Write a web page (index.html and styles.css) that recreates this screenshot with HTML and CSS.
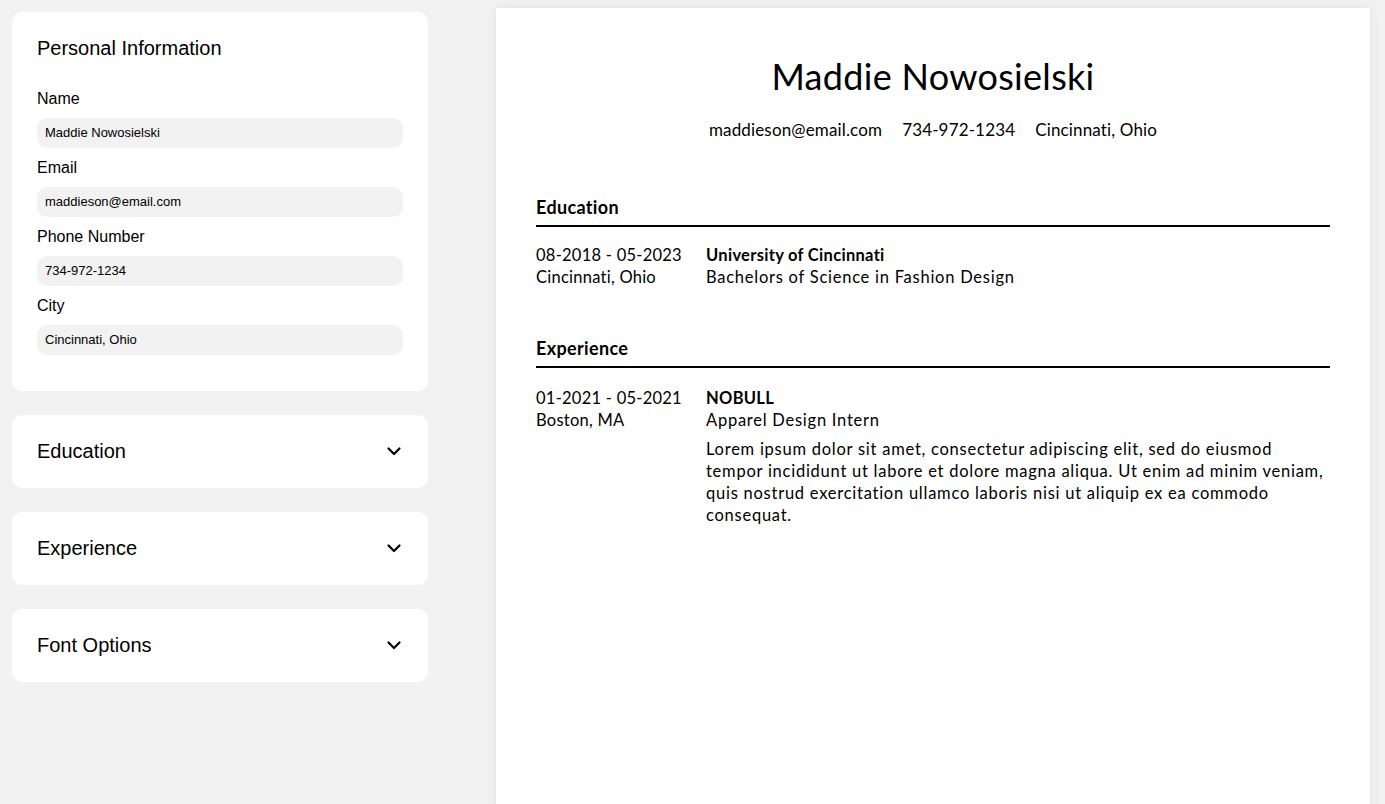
FILE: index.html
```html
<!DOCTYPE html>
<html lang="en">
<head>
<meta charset="utf-8">
<title>Resume Builder</title>
<link rel="stylesheet" href="styles.css">
</head>
<body>
<div class="app">
  <aside class="editor">
    <section class="card">
      <h2 class="card-title">Personal Information</h2>
      <div class="fields">
        <label class="field">
          <span class="field-label">Name</span>
          <span class="input">Maddie Nowosielski</span>
        </label>
        <label class="field">
          <span class="field-label">Email</span>
          <span class="input">maddieson@email.com</span>
        </label>
        <label class="field">
          <span class="field-label">Phone Number</span>
          <span class="input">734-972-1234</span>
        </label>
        <label class="field">
          <span class="field-label">City</span>
          <span class="input">Cincinnati, Ohio</span>
        </label>
      </div>
    </section>
    <section class="card collapsed">
      <h2 class="card-title">Education</h2>
      <svg class="chevron" viewBox="0 0 16 16" width="16" height="16"><path d="M2.5 5.5 8 11l5.5-5.5" fill="none" stroke="#000" stroke-width="2.2" stroke-linecap="round" stroke-linejoin="round"/></svg>
    </section>
    <section class="card collapsed">
      <h2 class="card-title">Experience</h2>
      <svg class="chevron" viewBox="0 0 16 16" width="16" height="16"><path d="M2.5 5.5 8 11l5.5-5.5" fill="none" stroke="#000" stroke-width="2.2" stroke-linecap="round" stroke-linejoin="round"/></svg>
    </section>
    <section class="card collapsed">
      <h2 class="card-title">Font Options</h2>
      <svg class="chevron" viewBox="0 0 16 16" width="16" height="16"><path d="M2.5 5.5 8 11l5.5-5.5" fill="none" stroke="#000" stroke-width="2.2" stroke-linecap="round" stroke-linejoin="round"/></svg>
    </section>
  </aside>

  <main class="page">
    <header class="resume-header">
      <h1 class="resume-name">Maddie Nowosielski</h1>
      <div class="contact">
        <span>maddieson@email.com</span>
        <span>734-972-1234</span>
        <span>Cincinnati, Ohio</span>
      </div>
    </header>

    <section class="resume-section">
      <h3 class="section-title">Education</h3>
      <div class="entry">
        <div class="entry-meta">
          <div>08-2018 - 05-2023</div>
          <div>Cincinnati, Ohio</div>
        </div>
        <div class="entry-body">
          <div class="entry-org">University of Cincinnati</div>
          <div>Bachelors of Science in Fashion Design</div>
        </div>
      </div>
    </section>

    <section class="resume-section">
      <h3 class="section-title">Experience</h3>
      <div class="entry">
        <div class="entry-meta">
          <div>01-2021 - 05-2021</div>
          <div>Boston, MA</div>
        </div>
        <div class="entry-body">
          <div class="entry-org">NOBULL</div>
          <div>Apparel Design Intern</div>
          <p class="entry-desc">Lorem ipsum dolor sit amet, consectetur adipiscing elit, sed do eiusmod tempor incididunt ut labore et dolore magna aliqua. Ut enim ad minim veniam, quis nostrud exercitation ullamco laboris nisi ut aliquip ex ea commodo consequat.</p>
        </div>
      </div>
    </section>
  </main>
</div>
</body>
</html>
```

FILE: styles.css
```css
* { box-sizing: border-box; }

html, body {
  margin: 0;
  height: 100%;
}

body {
  background: #f2f2f2;
  color: #000;
  font-family: "Liberation Sans", Arial, sans-serif;
  overflow: hidden;
}

.app {
  display: flex;
  align-items: flex-start;
  gap: 68px;
  padding: 8px 15px 0 12px;
  height: 100%;
}

.editor {
  width: 416px;
  flex: none;
  display: flex;
  flex-direction: column;
  gap: 24px;
  padding-top: 4px;
}

.card {
  background: #fff;
  border-radius: 10px;
  padding: 24px 25px 36px;
}

.card-title {
  margin: 0;
  font-size: 20px;
  font-weight: 400;
  line-height: 24px;
}

.fields {
  display: flex;
  flex-direction: column;
  gap: 10px;
  margin-top: 29px;
}

.field {
  display: flex;
  flex-direction: column;
  gap: 9px;
}

.field-label {
  font-size: 16px;
  line-height: 20px;
}

.input {
  display: block;
  height: 30px;
  background: #f2f2f2;
  border-radius: 10px;
  padding: 0 8px;
  font-size: 13px;
  line-height: 30px;
}

.card.collapsed {
  display: flex;
  align-items: center;
  justify-content: space-between;
  height: 73px;
  padding: 0 25px;
}

.card.collapsed .card-title {
  margin-bottom: 1px;
}

.chevron {
  margin-right: 1px;
  margin-bottom: 2px;
}

.page {
  flex: 1;
  height: 820px;
  background: #fff;
  box-shadow: 0 0 12px rgba(0, 0, 0, 0.08);
  padding: 44px 40px 0;
  font-family: Lato, "Open Sans", sans-serif;
  font-size: 16.5px;
  letter-spacing: 0.75px;
  line-height: 22px;
}

.resume-header {
  text-align: center;
}

.resume-name {
  margin: 0;
  font-size: 36px;
  font-weight: 400;
  line-height: 48px;
  letter-spacing: 0.3px;
}

.contact {
  display: flex;
  justify-content: center;
  gap: 20px;
  margin-top: 19px;
  font-size: 17px;
  letter-spacing: 0.15px;
}

.resume-section {
  margin-top: 55px;
}

.resume-section + .resume-section {
  margin-top: 49px;
}

.section-title {
  margin: 0;
  font-size: 18px;
  font-weight: 700;
  line-height: 22px;
  letter-spacing: 0.35px;
  padding-bottom: 7px;
  border-bottom: 2px solid #000;
}

.entry {
  display: flex;
  margin-top: 17px;
}

.resume-section + .resume-section .entry {
  margin-top: 19px;
}

.entry-meta {
  width: 170px;
  flex: none;
  letter-spacing: 0.25px;
}

.entry-body {
  flex: 1;
}

.entry-org {
  font-weight: 700;
  letter-spacing: 0.3px;
}

.entry-desc {
  margin: 7px 0 0;
}
```
